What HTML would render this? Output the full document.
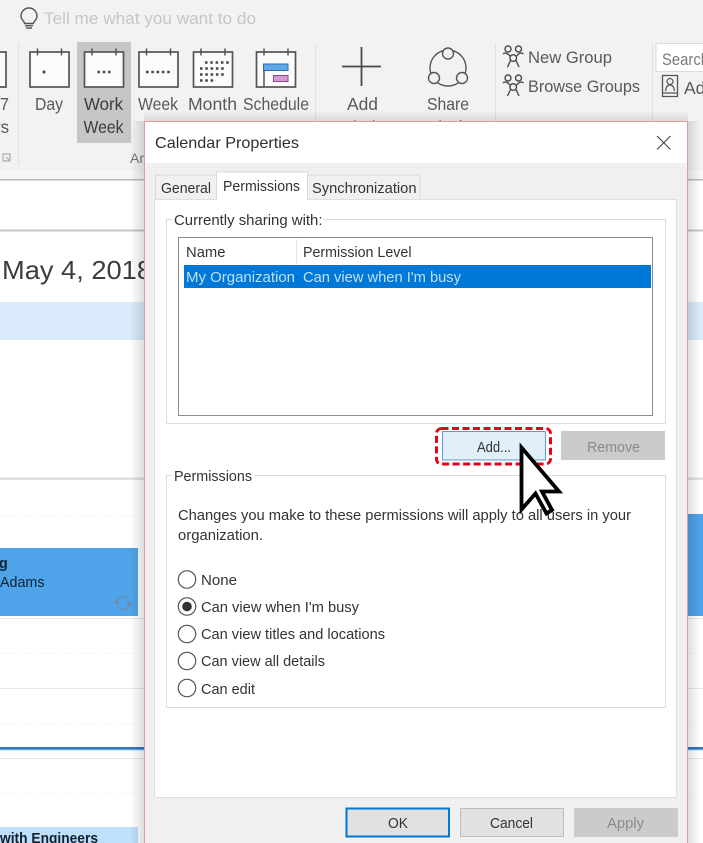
<!DOCTYPE html>
<html><head><meta charset="utf-8"><title>Calendar Properties</title>
<style>
html,body{margin:0;padding:0;width:703px;height:843px;overflow:hidden;background:#fff}
svg{display:block;position:absolute;left:0;top:0}
text{font-family:"Liberation Sans",sans-serif;font-size:14.5px;fill:#333;white-space:pre}
.r{font-size:17.5px;fill:#595959}
.i{fill:#fbfbfb;stroke:#555;stroke-width:1.7}
.t{fill:none;stroke:#555;stroke-width:1.5}
</style></head><body>
<svg width="703" height="843" viewBox="0 0 703 843">
<defs>
<linearGradient id="sl" x1="0" x2="1" y1="0" y2="0"><stop offset="0" stop-color="#000" stop-opacity="0"/><stop offset="1" stop-color="#000" stop-opacity=".13"/></linearGradient>
<linearGradient id="sr" x1="0" x2="1" y1="0" y2="0"><stop offset="0" stop-color="#000" stop-opacity=".13"/><stop offset="1" stop-color="#000" stop-opacity="0"/></linearGradient>
<linearGradient id="st" x1="0" x2="0" y1="0" y2="1"><stop offset="0" stop-color="#000" stop-opacity="0"/><stop offset="1" stop-color="#000" stop-opacity=".1"/></linearGradient>
<g id="cal"><rect class="i" x="0" y="3.500" width="39" height="35"/><path class="t" d="M7.500 0v7M31.500 0v7"/></g>
<g id="grp" fill="none" stroke="#4a4a4a" stroke-width="1.400"><circle cx="5" cy="4" r="3"/><circle cx="15.500" cy="4" r="3"/><circle cx="10.200" cy="13" r="3.300"/><path d="M0 9c1.500-1.500 4-1.500 7 2M20.500 9c-1.500-1.500-4-1.500-7 2M7.500 15.500l-3 6.500M13 15.500l3 6.500"/></g>
</defs>

<!-- ribbon -->
<rect width="703" height="170" fill="#f3f2f1"/>
<rect y="170" width="703" height="9" fill="#f7f7f7"/>
<path d="M24.500 23.500c0-2.500-3.500-3.500-3.500-7.500a8 8 0 1 1 16 0c0 4-3.500 5-3.500 7.500zM25 25.700h8M26 28h6" fill="none" stroke="#555" stroke-width="1.400"/>
<text x="44" y="24" style="font-size:17px;fill:#c6c6c6" textLength="212" lengthAdjust="spacingAndGlyphs">Tell me what you want to do</text>
<path d="M18.500 43v122M315.500 43v122M495.500 43v80M652.500 43v80" stroke="#e2e1e0"/>

<path class="i" d="M-4 52h10v35h-10z"/>
<text class="r" x="0" y="110" textLength="9" lengthAdjust="spacingAndGlyphs">7</text>
<text class="r" x="-5" y="133" textLength="14" lengthAdjust="spacingAndGlyphs">rs</text>
<path d="M3 154h7v7h-7zM6 157l4 4M10 158v3h-3" fill="none" stroke="#a0a0a0"/>

<rect x="77" y="42" width="54" height="101" fill="#c6c6c6"/>
<use href="#cal" x="30" y="48.500"/><circle cx="44" cy="72" r="1.500" fill="#444"/>
<use href="#cal" x="84.500" y="48.500"/><path d="M97.500 72h13" stroke="#444" stroke-width="2.500" stroke-dasharray="2.500 2.800"/>
<use href="#cal" x="139" y="48.500"/><path d="M146 72h26" stroke="#444" stroke-width="2.500" stroke-dasharray="2.500 2.800"/>
<use href="#cal" x="193.500" y="48.500"/>
<path d="M205 62.500h25M200 68.500h26M200 74.500h26M200 80.500h16" stroke="#444" stroke-width="2.500" stroke-dasharray="2.500 2.800"/>
<use href="#cal" x="256.500" y="48.500"/>
<path d="M264 70v17" stroke="#555" stroke-width="1.500"/>
<rect x="263.500" y="64" width="24.500" height="6.500" fill="#62a8e8" stroke="#2c6ea8"/>
<rect x="273.500" y="75.500" width="14.500" height="6" fill="#d79ad9" stroke="#8a4a8c"/>

<text class="r" x="35" y="110" textLength="28" lengthAdjust="spacingAndGlyphs">Day</text>
<text class="r" style="fill:#3c3c3c" x="84" y="110" textLength="39" lengthAdjust="spacingAndGlyphs">Work</text>
<text class="r" style="fill:#3c3c3c" x="83.500" y="133" textLength="40" lengthAdjust="spacingAndGlyphs">Week</text>
<text class="r" x="138" y="110" textLength="40" lengthAdjust="spacingAndGlyphs">Week</text>
<text class="r" x="188" y="110" textLength="49" lengthAdjust="spacingAndGlyphs">Month</text>
<text class="r" x="243" y="110" textLength="66" lengthAdjust="spacingAndGlyphs">Schedule</text>
<text x="130" y="163" style="font-size:14px;fill:#777">Ar</text>

<path d="M342 66.500h39M361.500 47v39" stroke="#4a4a4a" stroke-width="1.800"/>
<text class="r" x="347" y="110" textLength="31" lengthAdjust="spacingAndGlyphs">Add</text>
<text class="r" x="339" y="133" textLength="46" lengthAdjust="spacingAndGlyphs">Calendar</text>
<g fill="none" stroke="#555" stroke-width="1.400">
<circle cx="448" cy="68" r="18"/>
<circle cx="448" cy="53.500" r="5.500" fill="#f3f2f1"/><circle cx="434" cy="78" r="5.500" fill="#f3f2f1"/><circle cx="462" cy="78" r="5.500" fill="#f3f2f1"/>
</g>
<text class="r" x="427" y="110" textLength="42" lengthAdjust="spacingAndGlyphs">Share</text>
<text class="r" x="423" y="133" textLength="50" lengthAdjust="spacingAndGlyphs">Calendar</text>
<use href="#grp" x="503" y="45"/><use href="#grp" x="503" y="74"/>
<text class="r" style="font-size:16.5px" x="528" y="63" textLength="84" lengthAdjust="spacingAndGlyphs">New Group</text>
<text class="r" style="font-size:16.5px" x="528" y="92" textLength="112" lengthAdjust="spacingAndGlyphs">Browse Groups</text>
<rect x="656" y="43.500" width="60" height="28" fill="#fff" stroke="#dcdcdc"/>
<text x="662" y="65" style="font-size:16.5px;fill:#7a7a7a" textLength="47" lengthAdjust="spacingAndGlyphs">Search</text>
<path d="M662.500 75.500h15v21h-15zM662.500 93h15" fill="none" stroke="#555" stroke-width="1.300"/>
<circle cx="670" cy="81.500" r="3" fill="none" stroke="#555" stroke-width="1.200"/><path d="M665.500 91c.5-4 2-6 4.500-6s4 2 4.500 6" fill="none" stroke="#555" stroke-width="1.200"/>
<text class="r" x="684" y="94">Ad</text>

<!-- calendar background -->
<rect y="179" width="703" height="1.500" fill="#b9b9b9"/>
<rect y="229.500" width="703" height="2" fill="#c6c6c6"/>
<text x="2" y="279" style="font-size:26px;fill:#3d3d3d" textLength="150" lengthAdjust="spacingAndGlyphs">May 4, 2018</text>
<rect y="302" width="703" height="38" fill="#d9ebfb"/>
<rect y="477.500" width="703" height="2.500" fill="#e0e0e0"/>
<path d="M0 515.500h703M0 653.500h703M0 723.500h703M0 793.500h703" stroke="#e6e6e6" stroke-dasharray="1 4"/>
<path d="M0 618.500h703M0 688.500h703M0 758.500h703" stroke="#e6e6e6"/>
<rect y="747" width="703" height="2.500" fill="#2f78bf"/>
<rect y="749.500" width="703" height="1" fill="#a9cdee"/>

<rect x="0" y="548" width="138" height="68" fill="#4fa3e8"/>
<text x="-10" y="568" style="font-size:14.5px;font-weight:bold;fill:#0f2336">ng</text>
<text x="0" y="587" style="font-size:14.5px;fill:#0f2336" textLength="44.500" lengthAdjust="spacingAndGlyphs">Adams</text>
<g fill="none" stroke="#6b8ba8" stroke-width="1.300"><path d="M117 603a6.500 6.500 0 0 1 11.500-4M129.500 603a6.500 6.500 0 0 1-11.500 4"/><path d="M115 601l2 3 2.500-3M127.500 605l2-3 2 3"/></g>

<rect x="688" y="514" width="15" height="102" fill="#4fa3e8"/>

<rect x="0" y="827" width="138" height="16" fill="#bfe0fb"/>
<text x="0" y="843" style="font-size:14.5px;font-weight:bold;fill:#10202e" textLength="98" lengthAdjust="spacingAndGlyphs">with Engineers</text>

<!-- shadows -->
<rect x="130" y="121" width="14" height="722" fill="url(#sl)"/>
<rect x="688" y="121" width="12" height="722" fill="url(#sr)"/>
<rect x="144" y="110" width="544" height="11" fill="url(#st)"/>

<!-- dialog -->
<rect x="144.500" y="121.500" width="543" height="740" fill="#f0f0f0" stroke="#e59a98"/>
<rect x="145" y="122" width="542" height="41" fill="#fff"/>
<text x="155" y="148" style="font-size:16px;fill:#2f2f2f" textLength="144" lengthAdjust="spacingAndGlyphs">Calendar Properties</text>
<path d="M657 136l13.500 13.500M670.500 136l-13.500 13.500" stroke="#444" stroke-width="1.100"/>

<rect x="154.500" y="199.500" width="522" height="598" fill="#fff" stroke="#dfdfdf"/>
<path d="M155.500 199v-24h61v24M307 199v-24h113v24" fill="#f0f0f0" stroke="#d9d9d9"/>
<path d="M216.500 199.500v-27.500h91v27.500z" fill="#fff" stroke="#d9d9d9"/>
<rect x="217" y="198" width="90" height="3" fill="#fff"/>
<text x="161" y="193" textLength="50" lengthAdjust="spacingAndGlyphs">General</text>
<text x="223" y="191" textLength="77" lengthAdjust="spacingAndGlyphs">Permissions</text>
<text x="312" y="193" textLength="104.500" lengthAdjust="spacingAndGlyphs">Synchronization</text>

<rect x="166.500" y="219.500" width="499" height="204" fill="#fff" stroke="#dcdcdc"/>
<rect x="172" y="215" width="152" height="9" fill="#fff"/>
<text x="174" y="225" textLength="148.500" lengthAdjust="spacingAndGlyphs">Currently sharing with:</text>
<rect x="178.500" y="237.500" width="474" height="178" fill="#fff" stroke="#8d8d8d"/>
<path d="M296.500 239v25" stroke="#e8e8e8"/>
<text x="186" y="257" textLength="39.500" lengthAdjust="spacingAndGlyphs">Name</text>
<text x="303" y="257" textLength="108.500" lengthAdjust="spacingAndGlyphs">Permission Level</text>
<rect x="184" y="265" width="467" height="23" fill="#0078d7"/>
<text x="186" y="282" style="fill:#bfe0fb" textLength="109" lengthAdjust="spacingAndGlyphs">My Organization</text>
<text x="303" y="282" style="fill:#bfe0fb" textLength="158" lengthAdjust="spacingAndGlyphs">Can view when I'm busy</text>

<rect x="442.500" y="431.500" width="103" height="28.500" fill="#e1effb" stroke="#5a9bd0"/>
<text x="477" y="452" textLength="34" lengthAdjust="spacingAndGlyphs">Add...</text>
<rect x="436.500" y="428.500" width="114" height="35.500" rx="5" fill="none" stroke="#e8001a" stroke-width="3" stroke-dasharray="7 3.500"/>
<rect x="561" y="431" width="104" height="29" fill="#cbcbcb"/>
<text x="587" y="452" style="fill:#8a8a8a" textLength="53" lengthAdjust="spacingAndGlyphs">Remove</text>

<rect x="166.500" y="475.500" width="499" height="232" fill="#fff" stroke="#dcdcdc"/>
<rect x="172" y="471" width="82" height="9" fill="#fff"/>
<text x="174" y="481" textLength="78" lengthAdjust="spacingAndGlyphs">Permissions</text>
<text x="178" y="520" textLength="453" lengthAdjust="spacingAndGlyphs">Changes you make to these permissions will apply to all users in your</text>
<text x="178" y="540" textLength="85" lengthAdjust="spacingAndGlyphs">organization.</text>

<g fill="#fff" stroke="#555" stroke-width="1.200">
<circle cx="187" cy="579.500" r="8.700"/><circle cx="187" cy="606.500" r="8.700"/><circle cx="187" cy="634" r="8.700"/><circle cx="187" cy="661" r="8.700"/><circle cx="187" cy="688" r="8.700"/>
</g>
<circle cx="187" cy="606.500" r="4.800" fill="#333"/>
<text x="201" y="585" textLength="36" lengthAdjust="spacingAndGlyphs">None</text>
<text x="201" y="612" textLength="158" lengthAdjust="spacingAndGlyphs">Can view when I'm busy</text>
<text x="201" y="639" textLength="184" lengthAdjust="spacingAndGlyphs">Can view titles and locations</text>
<text x="201" y="666" textLength="124" lengthAdjust="spacingAndGlyphs">Can view all details</text>
<text x="201" y="694" textLength="54" lengthAdjust="spacingAndGlyphs">Can edit</text>

<rect x="346.500" y="808.500" width="102.500" height="28" fill="#e1e1e1" stroke="#0078d7" stroke-width="2"/>
<text x="388" y="828" textLength="20" lengthAdjust="spacingAndGlyphs">OK</text>
<rect x="460.500" y="808.500" width="103" height="28" fill="#e1e1e1" stroke="#bdbdbd"/>
<text x="490" y="828" textLength="43" lengthAdjust="spacingAndGlyphs">Cancel</text>
<rect x="574" y="808" width="104" height="29" fill="#cbcbcb"/>
<text x="607" y="828" style="fill:#8a8a8a" textLength="37" lengthAdjust="spacingAndGlyphs">Apply</text>

<!-- cursor -->
<path d="M521.500 447.500v62l14-16 11 20 5.500-3.500-10-18.500h17z" fill="#fff" stroke="#000" stroke-width="3.800" stroke-linejoin="miter"/>
</svg>
</body></html>
